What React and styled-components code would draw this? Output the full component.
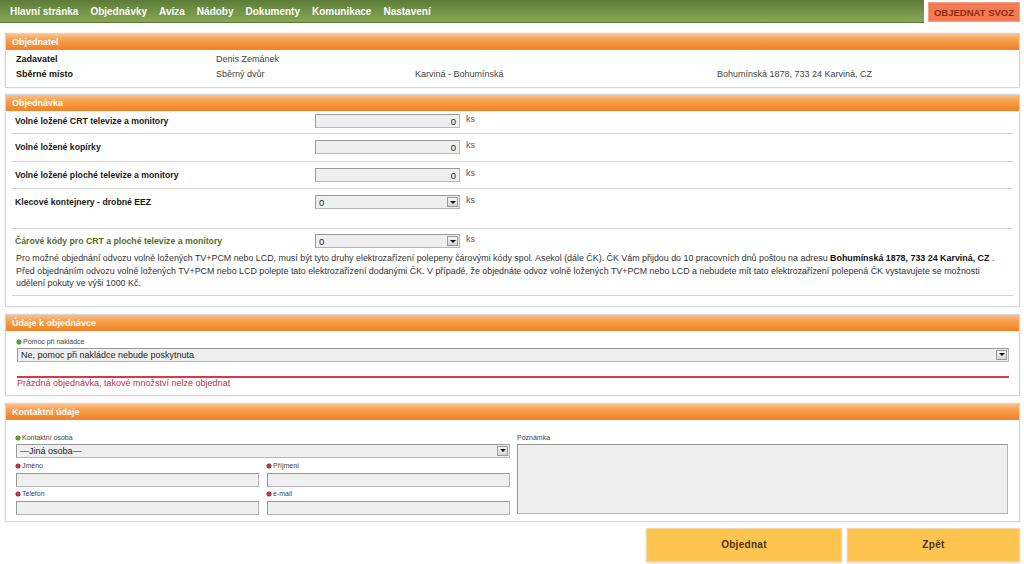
import React from 'react';
import styled, { createGlobalStyle } from 'styled-components';

const GlobalStyle = createGlobalStyle`
  html, body {
    margin: 0;
    padding: 0;
    background: #fff;
  }
  body {
    font-family: 'Liberation Sans', Arial, sans-serif;
    font-size: 9px;
    color: #333;
  }
`;

const Page = styled.div`
  width: 1024px;
  height: 564px;
  overflow: hidden;
`;

const TopBar = styled.div`
  display: flex;
  align-items: flex-start;
  gap: 4px;
`;

const Nav = styled.nav`
  flex: 1;
  height: 22px;
  display: flex;
  align-items: center;
  gap: 12px;
  padding-left: 10px;
  background: linear-gradient(#5d7b38, #7a9b4c 70%, #86a858);
  border-bottom: 1px solid #5b7434;
`;

const NavLink = styled.a`
  color: #fff;
  font-weight: bold;
  font-size: 10px;
  text-decoration: none;
`;

const OrderButton = styled.button`
  margin: 2px 4px 0 0;
  width: 92px;
  height: 20px;
  border: 1px solid #f3a182;
  background: #f37a52;
  color: #8a2d12;
  font-family: 'Liberation Sans', Arial, sans-serif;
  font-weight: bold;
  font-size: 9.5px;
  padding: 0;
`;

const Panel = styled.section`
  margin: ${p => p.gap}px 4px 0 5px;
  border: 1px solid #d6d6d6;
  box-shadow: 0 0 2px rgba(0, 0, 0, 0.12);
  background: #fff;
`;

const PanelHeader = styled.h2`
  margin: 0;
  height: 16px;
  line-height: 16px;
  padding-left: 6px;
  font-size: 9px;
  font-weight: bold;
  color: #fff;
  background: linear-gradient(#fbc08b, #f7a150 35%, #f38c33 75%, #f1832a);
`;

const InfoGrid = styled.div`
  display: grid;
  grid-template-columns: 200px 199px 302px 1fr;
  padding: 2px 11px 5px 10px;
  line-height: 15px;
`;

const InfoLabel = styled.div`
  font-weight: bold;
  color: #111;
`;

const InfoValue = styled.div`
  color: #444;
`;

const OrderBody = styled.div`
  padding: 0 6px 10px 6px;
`;

const ItemRow = styled.div`
  display: flex;
  align-items: center;
  padding: ${p => p.top}px 4px ${p => p.bottom}px 3px;
  border-bottom: ${p => (p.last ? 'none' : '1px solid #d2d2d2')};
`;

const ItemLabel = styled.div`
  width: 300px;
  font-weight: bold;
  font-size: 8.7px;
  color: ${p => (p.green ? '#52701f' : '#1a1a1a')};
`;

const QtyInput = styled.input`
  box-sizing: border-box;
  width: 145px;
  height: 14px;
  padding: 0 3px;
  border: 1px solid #b9b9b9;
  border-top-color: #9a9a9a;
  border-left-color: #9a9a9a;
  background: #efefef;
  font-family: 'Liberation Sans', Arial, sans-serif;
  font-size: 9.5px;
  text-align: right;
  color: #222;
`;

const SelectBox = styled.div`
  box-sizing: border-box;
  width: ${p => p.width || '145px'};
  height: ${p => p.height || 14}px;
  display: flex;
  align-items: center;
  justify-content: space-between;
  padding: 0 1px 0 3px;
  border: 1px solid #b5b5b5;
  border-top-color: #999;
  border-left-color: #999;
  background: #efefef;
  font-size: ${p => p.size || 9.5}px;
  color: #222;
`;

const SelectArrow = styled.span`
  box-sizing: border-box;
  width: 11px;
  height: 10px;
  display: flex;
  align-items: center;
  justify-content: center;
  border: 1px solid #999;
  background: linear-gradient(#f6f6f6, #d4d4d4);
  &::after {
    content: '';
    border-left: 3px solid transparent;
    border-right: 3px solid transparent;
    border-top: 3px solid #111;
  }
`;

const Unit = styled.span`
  margin-left: 6px;
  color: #555;
  margin-top: -4px;
`;

const Note = styled.p`
  margin: 0;
  padding: 4px 3px 5px 4px;
  line-height: 12.5px;
  font-size: 8.9px;
  color: #333;
  border-bottom: 1px solid #d2d2d2;
  b {
    color: #111;
  }
`;

const DetailBody = styled.div`
  padding: 6px 10px 7px 11px;
`;

const FieldLabel = styled.div`
  display: flex;
  align-items: center;
  gap: 2px;
  height: 10px;
  font-size: 7px;
  color: #444;
  margin-bottom: ${p => p.mb || 1}px;
`;

const Dot = styled.span`
  width: 4px;
  height: 4px;
  border-radius: 50%;
  background: ${p => (p.required ? '#c23a3f' : '#5da43e')};
  box-shadow: 0 0 0 0.5px ${p => (p.required ? '#8e2226' : '#3a7a24')};
`;

const ErrorLine = styled.div`
  margin-top: 14px;
  border-top: 2px solid #d8394a;
  line-height: 10px;
  color: #c8303c;
  font-size: 9px;
`;

const ContactBody = styled.div`
  display: grid;
  grid-template-columns: 494px 1fr;
  column-gap: 7px;
  padding: 13px 11px 6px 10px;
`;

const ContactLeft = styled.div`
  display: flex;
  flex-direction: column;
`;

const PairGrid = styled.div`
  display: grid;
  grid-template-columns: 1fr 1fr;
  column-gap: 8px;
  row-gap: 2px;
  margin-top: 3px;
`;

const Field = styled.div`
  display: flex;
  flex-direction: column;
`;

const TextInput = styled.input`
  box-sizing: border-box;
  width: 100%;
  height: 14px;
  border: 1px solid #b5b5b5;
  border-top-color: #999;
  border-left-color: #999;
  background: #efefef;
  margin: 0;
`;

const NoteArea = styled.textarea`
  box-sizing: border-box;
  width: 100%;
  height: 70px;
  resize: none;
  margin: 0;
  border: 1px solid #b5b5b5;
  border-top-color: #999;
  border-left-color: #999;
  background: #efefef;
`;

const Actions = styled.div`
  display: flex;
  justify-content: flex-end;
  gap: 5px;
  margin: 6px 4px 0 0;
`;

const ActionButton = styled.button`
  width: ${p => p.width}px;
  height: 34px;
  border: 1px solid #f2d8a0;
  background: #fec44f;
  box-shadow: 0 1px 2px rgba(0, 0, 0, 0.18);
  color: #4e3413;
  font-family: 'Liberation Sans', Arial, sans-serif;
  font-weight: bold;
  font-size: 10px;
  letter-spacing: 0.3px;
`;

const navItems = ['Hlavní stránka', 'Objednávky', 'Avíza', 'Nádoby', 'Dokumenty', 'Komunikace', 'Nastavení'];

const items = [
  { label: 'Volné ložené CRT televize a monitory', top: 3, bottom: 5 },
  { label: 'Volné ložené kopírky', top: 6, bottom: 7 },
  { label: 'Volné ložené ploché televize a monitory', top: 6, bottom: 6 },
];

function Select({ value, width, height, size }) {
  return (
    <SelectBox width={width} height={height} size={size}>
      <span>{value}</span>
      <SelectArrow />
    </SelectBox>
  );
}

export default function App() {
  return (
    <Page>
      <GlobalStyle />
      <TopBar>
        <Nav>
          {navItems.map(n => (
            <NavLink key={n} href="#">{n}</NavLink>
          ))}
        </Nav>
        <OrderButton>OBJEDNAT SVOZ</OrderButton>
      </TopBar>

      <Panel gap={10}>
        <PanelHeader>Objednatel</PanelHeader>
        <InfoGrid>
          <InfoLabel>Zadavatel</InfoLabel>
          <InfoValue>Denis Zemánek</InfoValue>
          <InfoValue />
          <InfoValue />
          <InfoLabel>Sběrné místo</InfoLabel>
          <InfoValue>Sběrný dvůr</InfoValue>
          <InfoValue>Karviná - Bohumínská</InfoValue>
          <InfoValue>Bohumínská 1878, 733 24 Karviná, CZ</InfoValue>
        </InfoGrid>
      </Panel>

      <Panel gap={6}>
        <PanelHeader>Objednávka</PanelHeader>
        <OrderBody>
          {items.map(it => (
            <ItemRow key={it.label} top={it.top} bottom={it.bottom}>
              <ItemLabel>{it.label}</ItemLabel>
              <QtyInput defaultValue="0" />
              <Unit>ks</Unit>
            </ItemRow>
          ))}
          <ItemRow top={6} bottom={19}>
            <ItemLabel>Klecové kontejnery - drobné EEZ</ItemLabel>
            <Select value="0" />
            <Unit>ks</Unit>
          </ItemRow>
          <ItemRow top={5} bottom={0} last>
            <ItemLabel green>Čárové kódy pro CRT a ploché televize a monitory</ItemLabel>
            <Select value="0" />
            <Unit>ks</Unit>
          </ItemRow>
          <Note>
            Pro možné objednání odvozu volně ložených TV+PCM nebo LCD, musí být tyto druhy elektrozařízení polepeny čárovými kódy spol. Asekol (dále ČK). ČK Vám přijdou do 10 pracovních dnů poštou na adresu <b>Bohumínská 1878, 733 24 Karviná, CZ</b> .
            <br />
            Před objednáním odvozu volně ložených TV+PCM nebo LCD polepte tato elektrozařízení dodanými ČK. V případě, že objednáte odvoz volně ložených TV+PCM nebo LCD a nebudete mít tato elektrozařízení polepená ČK vystavujete se možnosti udělení pokuty ve výši 1000 Kč.
          </Note>
        </OrderBody>
      </Panel>

      <Panel gap={7}>
        <PanelHeader>Údaje k objednávce</PanelHeader>
        <DetailBody>
          <FieldLabel mb={1}><Dot />Pomoc při nakládce</FieldLabel>
          <Select value="Ne, pomoc při nakládce nebude poskytnuta" width="100%" height={14} size={9} />
          <ErrorLine>Prázdná objednávka, takové množství nelze objednat</ErrorLine>
        </DetailBody>
      </Panel>

      <Panel gap={7}>
        <PanelHeader>Kontaktní údaje</PanelHeader>
        <ContactBody>
          <ContactLeft>
            <FieldLabel><Dot />Kontaktní osoba</FieldLabel>
            <Select value="—Jiná osoba—" width="100%" height={14} size={9} />
            <PairGrid>
              <Field>
                <FieldLabel mb={2}><Dot required />Jméno</FieldLabel>
                <TextInput />
              </Field>
              <Field>
                <FieldLabel mb={2}><Dot required />Příjmení</FieldLabel>
                <TextInput />
              </Field>
              <Field>
                <FieldLabel mb={2}><Dot required />Telefon</FieldLabel>
                <TextInput />
              </Field>
              <Field>
                <FieldLabel mb={2}><Dot required />e-mail</FieldLabel>
                <TextInput />
              </Field>
            </PairGrid>
          </ContactLeft>
          <Field>
            <FieldLabel>Poznámka</FieldLabel>
            <NoteArea />
          </Field>
        </ContactBody>
      </Panel>

      <Actions>
        <ActionButton width={196}>Objednat</ActionButton>
        <ActionButton width={173}>Zpět</ActionButton>
      </Actions>
    </Page>
  );
}
